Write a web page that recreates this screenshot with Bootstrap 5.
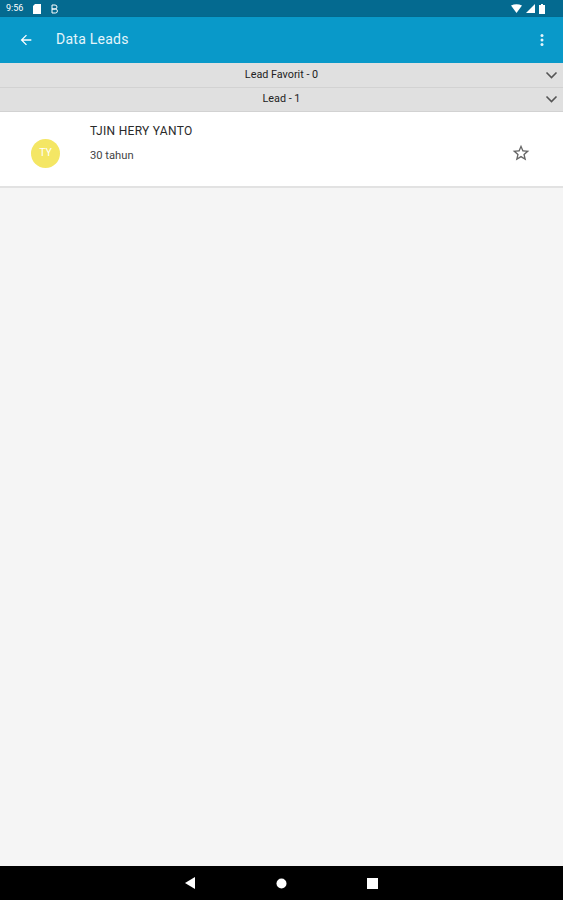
<!DOCTYPE html>
<html lang="en">
<head>
    <meta charset="UTF-8">
    <meta name="viewport" content="width=device-width, initial-scale=1.0">
    <title>Data Leads</title>
    <link href="https://cdn.jsdelivr.net/npm/bootstrap@5.3.0/dist/css/bootstrap.min.css" rel="stylesheet">
    <style>
        html, body { height: 100%; }
        body { background: #f5f5f5; font-family: "Roboto", "Liberation Sans", sans-serif; overflow: hidden; }
        .screen { height: 900px; }
        .status-bar { height: 17px; background: #046a90; color: #fff; font-size: 9px; padding: 0 18px 0 6px; }
        .status-left { gap: 10px; }
        .app-bar { height: 46px; background: #0999c9; color: #fff; padding: 0 19px 0 18px; box-shadow: 0 1px 2px rgba(0,0,0,.25); }
        .app-title { font-size: 14px; font-weight: 400; letter-spacing: .25px; margin-left: 22px; color: #e4f5fb; margin-top: -2px; }
        .group-row { height: 24.5px; background: #e0e0e0; border-bottom: 1px solid #d2d2d2; font-size: 10.8px; color: #222; padding-right: 5px; }
        .group-label { padding-left: 18px; }
        .lead-row { height: 75.5px; background: #fff; border-bottom: 2px solid #e2e2e2; padding-left: 31px; padding-right: 32px; }
        .lead-avatar { width: 29px; height: 29px; border-radius: 50%; background: #f4e664; color: #fff; font-size: 10.5px; margin-top: 9px; }
        .lead-info { margin-left: 30px; margin-top: -10px; }
        .lead-name { font-size: 12px; color: #2a2a2a; letter-spacing: .3px; }
        .lead-age { font-size: 11.2px; color: #444; margin-top: 8px; }
        .lead-star { margin-top: 9px; }
        .nav-bar { height: 34px; background: #000; gap: 80px; }
    </style>
</head>
<body>
    <div class="screen d-flex flex-column">
        <div class="status-bar d-flex align-items-center justify-content-between">
            <div class="status-left d-flex align-items-center">
                <span>9:56</span>
                <svg width="8" height="10" viewBox="0 0 8 10"><path d="M2 0h6v10H0V2z" fill="#fff"/></svg>
                <svg width="7" height="10" viewBox="0 0 7 10"><path d="M1 1h3a1.6 1.6 0 0 1 0 4H1zM1 5h3.4a1.9 1.9 0 0 1 0 4H1z" fill="none" stroke="#fff" stroke-width="1"/></svg>
            </div>
            <div class="d-flex align-items-center gap-1">
                <svg width="11" height="9" viewBox="0 0 11 9"><path d="M0 1.500Q5.500-1 11 1.500L5.500 9z" fill="#fff"/></svg>
                <svg width="9" height="9" viewBox="0 0 9 9"><path d="M9 0v9H0z" fill="#fff"/></svg>
                <svg width="6" height="10" viewBox="0 0 6 10"><path d="M2 0h2v1h2v9H0V1h2z" fill="#fff"/></svg>
            </div>
        </div>
        <div class="app-bar d-flex align-items-center">
            <svg width="16" height="16" viewBox="0 0 24 24"><path d="M20 11H7.800l5.600-5.600L12 4l-8 8 8 8 1.400-1.400L7.800 13H20z" fill="#fff"/></svg>
            <span class="app-title">Data Leads</span>
            <svg class="ms-auto" width="4" height="14" viewBox="0 0 4 14"><circle cx="2" cy="2.500" r="1.500" fill="#e4f5fb"/><circle cx="2" cy="7" r="1.500" fill="#e4f5fb"/><circle cx="2" cy="11.500" r="1.500" fill="#e4f5fb"/></svg>
        </div>
        <div class="group-row d-flex align-items-center">
            <div class="group-label flex-grow-1 text-center">Lead Favorit - 0</div>
            <svg width="13" height="8" viewBox="0 0 13 8"><path d="M1.500 1.500l5 5 5-5" fill="none" stroke="#555" stroke-width="1.600"/></svg>
        </div>
        <div class="group-row d-flex align-items-center">
            <div class="group-label flex-grow-1 text-center">Lead - 1</div>
            <svg width="13" height="8" viewBox="0 0 13 8"><path d="M1.500 1.500l5 5 5-5" fill="none" stroke="#555" stroke-width="1.600"/></svg>
        </div>
        <div class="lead-row d-flex align-items-center">
            <div class="lead-avatar d-flex align-items-center justify-content-center flex-shrink-0">TY</div>
            <div class="lead-info flex-grow-1">
                <div class="lead-name">TJIN HERY YANTO</div>
                <div class="lead-age">30 tahun</div>
            </div>
            <svg class="lead-star" width="20" height="20" viewBox="0 0 24 24"><path d="M22 9.240l-7.190-.62L12 2 9.190 8.630 2 9.240l5.460 4.730L5.820 21 12 17.270 18.180 21l-1.630-7.030zM12 15.400l-3.760 2.270 1-4.280-3.320-2.880 4.380-.38L12 6.100l1.710 4.040 4.380.38-3.320 2.880 1 4.280z" fill="#666"/></svg>
        </div>
        <div class="flex-grow-1"></div>
        <div class="nav-bar d-flex align-items-center justify-content-center">
            <svg width="11" height="12" viewBox="0 0 11 12"><path d="M10 0v12L0 6z" fill="#fff"/></svg>
            <svg width="11" height="11" viewBox="0 0 11 11"><circle cx="5.500" cy="5.500" r="5" fill="#fff"/></svg>
            <svg width="11" height="11" viewBox="0 0 11 11"><rect width="11" height="11" fill="#fff"/></svg>
        </div>
    </div>
    <script src="https://cdn.jsdelivr.net/npm/bootstrap@5.3.0/dist/js/bootstrap.bundle.min.js"></script>
</body>
</html>
